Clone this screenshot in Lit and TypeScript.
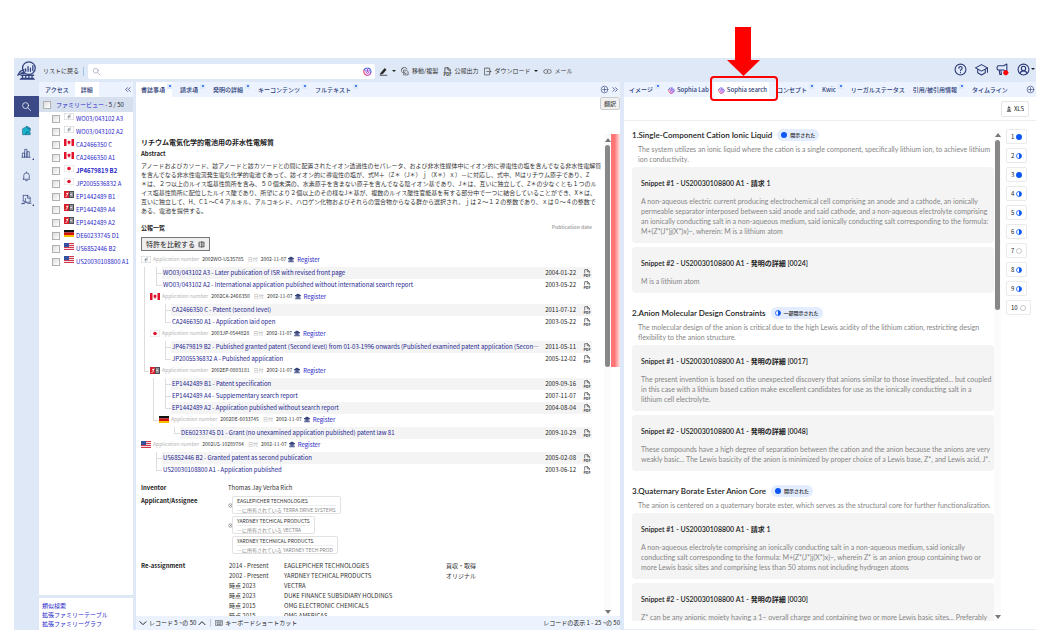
import { LitElement, html, svg, css, nothing, TemplateResult } from "lit";
import { customElement, property } from "lit/decorators.js";
import { classMap } from "lit/directives/class-map.js";

type Pub = [code: string, date: string];
interface Family {
  flag: string;
  app: string;
  pubs: Pub[];
  kids?: Family[];
}
type State = "full" | "half" | "none";

const icon = (cls: string, box: number, body: unknown) =>
  html`<svg class="icon ${cls}" viewBox="0 0 ${box} ${box}" fill="none" stroke="currentColor" stroke-width="1.6" stroke-linecap="round" stroke-linejoin="round" aria-hidden="true">${body}</svg>`;

const shapes = {
  search: svg`<circle cx="10" cy="10" r="6.5"/><path d="M15 15l6 6"/>`,
  logo: svg`<circle cx="15" cy="9" r="8"/><path d="M9 14L1 18l3-5 5-2M5 15l4 1" /><path d="M11 13v-3M14 13V7M17 13V9M20 12V6"/><path d="M4 24h18M5 22h16M7 22v-4M11 22v-4M15 22v-4M19 22v-4M5 18h16"/>`,
  puzzle: svg`<path d="M4 8l9-5 7 4v6l-3 1 3 2v5H4z" fill="#18b4c9" stroke="#246a91"/><path d="M12 3l3 5 5 1M11 20v-4h5" stroke="#15598a"/>`,
  chart: svg`<path d="M3 20V11h5v9M8 20V3h5v17M13 20V8h5v12M2 20h18"/>`,
  bell: svg`<path d="M6 17V10a6 6 0 0 1 12 0v7l1 1H5zM10 21h4M12 4V2"/>`,
  report: svg`<path d="M5 3h10l5 5v10H9M5 3v11M14 3v6h6M2 21c5 0 9-5 8-11M4 15c4 0 8 2 11 6M2 21h6M17 21l5-1"/>`,
  pen: svg`<path d="M5 16L15 4l4 3-9 11-6 1z" fill="#222" stroke="#222"/><path d="M3 22h18" stroke="#222" stroke-width="2"/>`,
  copy: svg`<path d="M4 15a8 8 0 1 1 12-10M8 8h6l5 5v8H8zM3 5l3-2M11 12a3 3 0 1 0 4 4"/>`,
  pdf: svg`<path d="M5 12V2h9l5 5v5M13 2v6h6" stroke-width="2"/><text x="12" y="23" text-anchor="middle" font-size="11" font-weight="700" fill="currentColor" stroke="none">PDF</text>`,
  down: svg`<path d="M10 3H4v18h14v-6M10 3h8v5M10 12h11M17 8l4 4-4 4"/>`,
  link: svg`<path d="M9 17H7a5 5 0 0 1 0-10h2a4 4 0 0 1 4 5M15 7h2a5 5 0 0 1 0 10h-2a4 4 0 0 1-4-5"/>`,
  help: svg`<g stroke-width="2"><circle cx="12" cy="12" r="10"/><path d="M9 9.500a3 3 0 1 1 4.500 2.600c-1 .6-1.500 1-1.500 2.200M12 17.500v.3"/></g>`,
  cap: svg`<path d="M1 9l11-6 11 6-11 6zM5 12v6l7 4 7-4v-6M23 9v8" stroke-width="2"/>`,
  horn: svg`<path d="M20 2v14l-6-3H5a3 3 0 0 1-3-3V8a3 3 0 0 1 3-3h9zM6 13l1 8h3l-1-8" stroke-width="2"/><circle cx="18" cy="18" r="4" fill="#f00" stroke="#f00"/>`,
  user: svg`<g stroke-width="2"><circle cx="12" cy="12" r="10"/><circle cx="12" cy="10" r="4"/><path d="M6 19c1-6 11-6 12 0"/></g>`,
  plus: svg`<circle cx="12" cy="12" r="9"/><path d="M12 7v10M7 12h10"/>`,
  compare: svg`<path d="M10 4H3v16h7M14 4h7v16h-7M12 2v20M17 4v16M6 9v6" stroke-width="2"/>`,
  bank: svg`<path d="M2 8l10-6 10 6zM5 10v8M10 10v8M14 10v8M19 10v8M2 21h20" fill="#1c2c6b" stroke="#1c2c6b" stroke-width="3"/>`,
  upload: svg`<path d="M12 16V4M7 8l5-5 5 5M5 21h14M7 16h10" stroke-width="3"/>`,
  keys: svg`<path d="M2 5h20v14H2zM6 9h2M11 9h2M16 9h2M6 12h2M11 12h2M16 12h2M7 16h10"/>`,
  sophia: svg`<path d="M3 8a10 10 0 0 0 7 14" stroke="#f0466c" stroke-width="3"/><path d="M10 22a10 10 0 0 0 11-8" stroke="#c03ac0" stroke-width="3"/><path d="M13 3a9 9 0 0 1 8 11M3 8c1-3 3-4 6-5" stroke="#4a62ee" stroke-width="3"/><path d="M8 9v4a4 4 0 0 0 8 0V8M12 5v7" stroke="#9c4fd6" stroke-width="2.600"/>`,
  chevDown: svg`<path d="M3 8l9 9 9-9" stroke-width="3"/>`,
  chevUp: svg`<path d="M3 17l9-9 9 9" stroke-width="3"/>`,
  expand: svg`<circle cx="12" cy="12" r="9"/><path d="M8 8l8 8M16 8l-8 8"/>`,
  more: svg`<path d="M5 7l5 5-5 5M12 7l5 5-5 5" stroke-width="2"/>`,
  less: svg`<path d="M12 7l-5 5 5 5M19 7l-5 5 5 5" stroke-width="2"/>`,
};

const flagArt: Record<string, TemplateResult> = {
  WO: svg`<rect x=".5" y=".5" width="19" height="13" fill="#fff" stroke="#ccc"/><path d="M7 10l6-7M7 7h6M9 4v8M12 3v8" stroke="#7b8792" stroke-width="1"/>`,
  CA: svg`<rect width="20" height="14" fill="#fff"/><rect width="5" height="14" fill="#e0122c"/><rect x="15" width="5" height="14" fill="#e0122c"/><path d="M10 2l1 2 2 0-.5 3 1 1-3 2v2h-1v-2l-3-2 1-1L7 4h2z" fill="#e0122c"/>`,
  JP: svg`<rect x=".5" y=".5" width="19" height="13" fill="#fff" stroke="#ddd"/><circle cx="10" cy="7" r="3.600" fill="#e0122c"/>`,
  EP: svg`<rect width="10" height="14" fill="#d8202c"/><rect x="10" width="10" height="14" fill="#4b4f55"/><path d="M3 11c4 0 3-4 5-8M4 5h4M12 4h6M12 7h5M12 10h6" stroke="#fff" stroke-width="1.600" fill="none"/>`,
  DE: svg`<rect width="20" height="5" fill="#111"/><rect y="5" width="20" height="5" fill="#d80f0f"/><rect y="10" width="20" height="4" fill="#f5c400"/>`,
  US: svg`<rect width="20" height="14" fill="#f4dfe2"/><path d="M0 1h20M0 5h20M0 9h20M0 13h20" stroke="#d03a4c" stroke-width="2"/><rect width="10" height="8" fill="#35509c"/>`,
};
const flag = (code: string) =>
  html`<svg class="flag" viewBox="0 0 20 14" role="img" aria-label=${code}>${flagArt[code]}</svg>`;

const base = css`
  :host {
    font-family: "Noto Sans CJK JP", sans-serif;
    font-size: 6px;
    line-height: 10px;
    color: #333;
  }
  * { box-sizing: border-box; }
  button, input { font: inherit; color: inherit; margin: 0; padding: 0; border: 0; background: none; }
  button { display: inline-flex; align-items: center; white-space: nowrap; cursor: pointer; }
  ul, ol, p, h1, h2, h3, dl, dd { margin: 0; padding: 0; list-style: none; }
  h1, h2, h3 { font-size: inherit; }
  a { color: #2a1fc8; text-decoration: none; }
  .icon { flex: none; width: 9px; height: 9px; display: block; }
  .flag { flex: none; width: 10px; height: 7px; display: block; }
  .tabs { display: flex; align-items: stretch; height: 15px; background: #ecf3fe; color: #2b3a78; font-weight: 500; flex: none; }
  .tab { padding: 1px 0 0; gap: 2px; }
  .tab.on { background: #fff; }
  .pop { align-self: flex-start; width: 5px; height: 5px; margin-top: 1px; background: #dce9fd; display: block; }
  .pop::after { content: ""; display: block; width: 2px; height: 2px; margin: 1px 0 0 2px; background: #4a84ee; }
  .grow { flex: 1; }
  .bar { display: flex; flex-direction: column; align-items: center; justify-content: space-between; width: 7px; background: #fbfbfb; padding: 4px 0 2px; flex: none; }
  .up, .dn { width: 0; height: 0; border: 3px solid transparent; border-top: 0; border-bottom: 4px solid #777; }
  .dn { border-bottom: 0; border-top: 4px solid #777; }
  .track { flex: 1; width: 5px; margin: 3px 0; }
  .thumb { width: 5px; border-radius: 3px; background: #888; }
`;

@customElement("state-dot")
export class StateDot extends LitElement {
  @property() state: State = "full";
  static styles = css`
    :host { display: inline-flex; }
    svg { width: 6px; height: 6px; }
  `;
  render() {
    const blue = "#0b57f5";
    return html`<svg viewBox="0 0 12 12">
      ${this.state === "full"
        ? svg`<circle cx="6" cy="6" r="6" fill=${blue}/>`
        : this.state === "half"
          ? svg`<circle cx="6" cy="6" r="5" fill="#fff" stroke=${blue} stroke-width="1.600"/><path d="M6 1a5 5 0 0 1 0 10z" fill=${blue}/>`
          : svg`<circle cx="6" cy="6" r="5" fill="#fff" stroke="#aaa" stroke-width="1.300"/>`}
    </svg>`;
  }
}

@customElement("family-panel")
export class FamilyPanel extends LitElement {
  static styles = [
    base,
    css`
      :host { display: flex; flex-direction: column; gap: 3px; width: 94px; flex: none; }
      .top { flex: 1; background: #fff; }
      .tabs { padding: 0 1px 0 0; }
      .tab { padding: 1px 6px 0; }
      .head { display: flex; align-items: center; gap: 5px; height: 15px; background: #d5dfee; padding-left: 4px; color: #223; white-space: nowrap; }
      input { appearance: none; width: 8px; height: 8px; border: 1px solid #b0b0b0; background: linear-gradient(135deg, #ddd, #fff); flex: none; }
      li { display: flex; align-items: center; height: 13px; padding-left: 13px; gap: 4px; white-space: nowrap; }
      li label { display: flex; gap: 2px; color: #2a1fc8; }
      .flag { margin-top: -1px; }
      .cur { font-weight: 700; }
      .low { background: #fff; padding: 3px 3px 2px; display: flex; flex-direction: column; line-height: 9px; }
    `,
  ];
  render() {
    const items = ["WO03/043102 A3", "WO03/043102 A2", "CA2466350 C", "CA2466350 A1", "JP4679819 B2", "JP2005536832 A", "EP1442489 B1", "EP1442489 A4", "EP1442489 A2", "DE60233745 D1", "US6852446 B2", "US20030108800 A1"];
    return html`
      <section class="top">
        <div class="tabs">
          <button class="tab">アクセス</button><button class="tab on">詳細</button><span class="grow"></span><button aria-label="閉じる">${icon("", 24, shapes.less)}</button>
        </div>
        <div class="head"><input type="checkbox" aria-label="すべて選択" /><span><a href="#">ファミリービュー</a> - 5 / 50</span></div>
        <ul>
          ${items.map(
            (t, i) => html`<li>
              <input type="checkbox" id="p${i}" />
              <label for="p${i}" class=${classMap({ cur: i === 4 })}>${flag(t.slice(0, 2))}${t}</label>
            </li>`
          )}
        </ul>
      </section>
      <nav class="low"><a href="#">類似検索</a><a href="#">拡張ファミリーテーブル</a><a href="#">拡張ファミリーグラフ</a></nav>
    `;
  }
}

const families: Family[] = [
  {
    flag: "WO",
    app: "2002WO-US35785",
    pubs: [
      ["WO03/043102 A3 - Later publication of ISR with revised front page", "2004-01-22"],
      ["WO03/043102 A2 - International application published without international search report", "2003-05-22"],
    ],
    kids: [
      { flag: "CA", app: "2002CA-2466350", pubs: [["CA2466350 C - Patent (second level)", "2011-07-12"], ["CA2466350 A1 - Application laid open", "2003-05-22"]] },
      { flag: "JP", app: "2003JP-0544828", pubs: [["JP4679819 B2 - Published granted patent (Second level) from 01-03-1996 onwards (Published examined patent application (Second level) before 1996)", "2011-05-11"], ["JP2005536832 A - Published application", "2005-12-02"]] },
      {
        flag: "EP",
        app: "2002EP-0803181",
        pubs: [["EP1442489 B1 - Patent specification", "2009-09-16"], ["EP1442489 A4 - Supplementary search report", "2007-11-07"], ["EP1442489 A2 - Application published without search report", "2004-08-04"]],
        kids: [{ flag: "DE", app: "2002DE-6033745", pubs: [["DE60233745 D1 - Grant (no unexamined application published) patent law 81", "2009-10-29"]] }],
      },
    ],
  },
  { flag: "US", app: "2002US-10289784", pubs: [["US6852446 B2 - Granted patent as second publication", "2005-02-08"], ["US20030108800 A1 - Application published", "2003-06-12"]] },
];

@customElement("record-panel")
export class RecordPanel extends LitElement {
  static styles = [
    base,
    css`
      :host { display: flex; flex-direction: column; background: #fff; min-width: 0; min-height: 0; }
      .tabs { gap: 8px; padding: 0; }
      .tabs .grow + button { margin-right: -6px; }
      .tab.on { padding-left: 5px; }
      .tools { display: flex; justify-content: flex-end; height: 37px; flex: none; }
      .tr { height: 13px; padding: 0 3px; border: 1px solid #ccc; border-radius: 2px; background: #f0f0f0; }
      .main { flex: 1; display: flex; min-height: 0; overflow: hidden; }
      .doc { flex: 1; min-width: 0; padding: 3px 12px 0 5px; overflow: hidden; color: #333; }
      .thumb { height: 222px; }
      .heat { width: 9px; height: 233px; background: linear-gradient(90deg, #ff7474 40%, #ffb9b9 75%, #ffe3e3); flex: none; }
      h1 { font-size: 7px; line-height: 11px; margin-bottom: 1px; color: #222; }
      h2 { color: #222; }
      .abs { line-height: 9px; margin-top: 2px; white-space: nowrap; }
      .abs span { display: block; }
      .listhead { display: flex; justify-content: space-between; margin-top: 8px; }
      .listhead span { font-size: 5px; color: #aaa; font-weight: 700; line-height: 8px; }
      .cmp { font-size: 7px; height: 14px; margin: 4px 0 3px; padding: 0 4px; gap: 3px; border: 1px solid #777; background: #efefef; color: #222; }
      .cmp .icon { width: 7px; height: 7px; }
      .fam { position: relative; }
      .app { display: flex; gap: 3px; height: 13px; line-height: 10px; font-size: 5px; white-space: nowrap; color: #b4b4b4; }
      .app b { font-weight: 400; color: #333; }
      .app a { font-size: 6px; line-height: 12px; }
      .app .flag { margin: 2px -1px 0 0; }
      .app .icon { width: 6px; height: 7px; margin: 2px 0 0 -1px; }
      .pubs { padding-left: 21px; position: relative; }
      .pubs li { position: relative; display: flex; align-items: center; height: 12px; padding: 0 1px; }
      .pubs li:nth-child(odd) { background: #f4f4f4; }
      .pubs li::before { content: ""; position: absolute; left: -6px; top: -6px; width: 5px; height: 12px; border: solid #ddd; border-width: 0 0 1px 1px; }
      .pubs li:first-child::before { top: 0; height: 6px; }
      .pubs a { flex: 1; min-width: 0; overflow: hidden; text-overflow: ellipsis; white-space: nowrap; color: #23238e; }
      .pubs time { margin: 0 7px 0 4px; color: #222; }
      .pubs .icon { color: #444; width: 8px; height: 8px; }
      .kids { padding-left: 9px; }
      .kids > .fam::before { content: ""; position: absolute; left: -6px; top: -1px; width: 1px; bottom: 0; background: #ddd; }
      .kids > .fam:last-child::before { bottom: auto; height: 7px; width: 4px; background: none; border: solid #ddd; border-width: 0 0 1px 1px; }
      .has > .pubs::before { content: ""; position: absolute; left: 3px; top: 0; bottom: 0; width: 1px; background: #ddd; }
      .info { display: grid; grid-template-columns: 87px 1fr; row-gap: 3px; margin-top: 7px; }
      dt { font-weight: 700; color: #222; }
      .own { display: flex; flex-direction: column; align-items: flex-start; gap: 2px; margin: 0 0 4px; }
      .own li { display: flex; align-items: center; gap: 0; }
      .own .icon { width: 5px; height: 5px; margin-right: -1px; }
      .own .none { width: 4px; }
      .own div { border: 1px solid #e2e2e2; border-radius: 2px; padding: 0 4px; height: 18px; font-size: 5px; line-height: 8px; white-space: nowrap; }
      .own p + p { color: #888; border-top: 1px solid #eee; }
      table { border-collapse: collapse; width: 100%; }
      td { padding: 0 0 0 1px; height: 10px; white-space: nowrap; }
      td:nth-child(1) { width: 55px; }
      td:nth-child(2) { width: 162px; }
      footer { display: flex; align-items: center; gap: 2px; height: 14px; padding: 0 0 0 3px; background: #ecf3fe; color: #222; flex: none; white-space: nowrap; }
      footer i { width: 1px; height: 8px; background: #bcd; margin: 0 2px; }
      footer button { gap: 2px; }
      footer .icon { width: 8px; height: 8px; }
    `,
  ];
  fam(f: Family): TemplateResult {
    return html`<li class=${classMap({ fam: true, has: !!f.kids })}>
      <div class="app">${flag(f.flag)}<span>Application number</span> <b>${f.app}</b> <span>&nbsp;日付</span> <b>2002-11-07</b>${icon("", 24, shapes.bank)}<a href="#">Register</a></div>
      <ul class="pubs">
        ${f.pubs.map(([t, d]) => html`<li><a href="#">${t}</a><time>${d}</time>${icon("", 24, shapes.pdf)}</li>`)}
      </ul>
      ${f.kids ? html`<ul class="kids">${f.kids.map((k) => this.fam(k))}</ul>` : nothing}
    </li>`;
  }
  render() {
    const tabs = ["書誌事項", "請求項", "発明の詳細", "キーコンテンツ", "フルテキスト"];
    const abs = [
      "アノードおよびカソード、該アノードと該カソードとの間に配置されたイオン透過性のセパレータ、および非水性媒体中にイオン的に導電性の塩を含んでなる非水性電解質",
      "を含んでなる非水性電流発生電気化学的電池であって、該イオン的に導電性の塩が、式M＋（Z＊（J＊）ｊ（X＊）ｘ）－に対応し、式中、Mはリチウム原子であり、Z",
      "＊は、２つ以上のルイス塩基性箇所を含み、５０個未満の、水素原子を含まない原子を含んでなる陰イオン基であり、J＊は、互いに独立して、Z＊の少なくとも１つのル",
      "イス塩基性箇所に配位したルイス酸であり、所望により２個以上のその様なJ＊基が、複数のルイス酸性官能基を有する部分中で一つに結合していることができ、X＊は、",
      "互いに独立して、H、C１～C４アルキル、アルコキシド、ハロゲン化物およびそれらの混合物からなる群から選択され、ｊは２～１２の整数であり、ｘは０～４の整数で",
      "ある、電池を提供する。",
    ];
    const owners: [string, string, boolean][] = [
      ["EAGLEPICHER TECHNOLOGIES", "TERRA DRIVE SYSTEMS", true],
      ["YARDNEY TECHICAL PRODUCTS", "VECTRA", true],
      ["YARDNEY TECHNICAL PRODUCTS", "YARDNEY TECH PROD", false],
    ];
    const moves = [
      ["2014 - Present", "EAGLEPICHER TECHNOLOGIES", "買収・取得"],
      ["2002 - Present", "YARDNEY TECHICAL PRODUCTS", "オリジナル"],
      ["時点 2023", "VECTRA", ""],
      ["時点 2023", "DUKE FINANCE SUBSIDIARY HOLDINGS", ""],
      ["時点 2015", "OMG ELECTRONIC CHEMICALS", ""],
      ["時点 2015", "OMG AMERICAS", ""],
    ];
    return html`
      <div class="tabs">
        ${tabs.map((t, i) => html`<button class=${classMap({ tab: true, on: i === 0 })}>${t}<span class="pop"></span></button>`)}
        <span class="grow"></span><button aria-label="追加">${icon("", 24, shapes.plus)}</button><button aria-label="展開">${icon("", 24, shapes.more)}</button>
      </div>
      <div class="tools"><button class="tr">翻訳</button></div>
      <div class="main">
        <article class="doc">
          <h1>リチウム電気化学的電池用の非水性電解質</h1>
          <h2>Abstract</h2>
          <p class="abs">${abs.map((l) => html`<span>${l}</span>`)}</p>
          <div class="listhead"><h2>公報一覧</h2><span>Publication date</span></div>
          <button class="cmp">特許を比較する ${icon("", 24, shapes.compare)}</button>
          <ul>${families.map((f) => this.fam(f))}</ul>
          <dl class="info">
            <dt>Inventor</dt><dd>Thomas Jay Verba Rich</dd>
            <dt>Applicant/Assignee</dt>
            <dd><ul class="own">
              ${owners.map(([a, b, x]) => html`<li>${x ? icon("", 24, shapes.expand) : html`<span class="none"></span>`}<div><p>${a}</p><p>―に所有されている ${b}</p></div></li>`)}
            </ul></dd>
            <dt>Re-assignment</dt>
            <dd><table><tbody>${moves.map((r) => html`<tr>${r.map((c) => html`<td>${c}</td>`)}</tr>`)}</tbody></table></dd>
          </dl>
        </article>
        <div class="bar"><span class="up"></span><div class="track"><div class="thumb"></div></div><span class="dn"></span></div>
        <div class="heat"></div>
      </div>
      <footer>
        <button aria-label="次">${icon("", 24, shapes.chevDown)}</button>レコード 5 ~の 50<button aria-label="前">${icon("", 24, shapes.chevUp)}</button><i></i>
        <button>${icon("", 24, shapes.keys)}キーボードショートカット</button><span class="grow"></span><span>レコードの表示 1 - 25 ~の 50</span>
      </footer>
    `;
  }
}

interface Concept {
  title: string;
  state: State;
  label: string;
  desc: string;
  snips: [string, string][];
}
const concepts: Concept[] = [
  {
    title: "1.Single-Component Cation Ionic Liquid",
    state: "full",
    label: "開示された",
    desc: "The system utilizes an ionic liquid where the cation is a single component, specifically lithium ion, to achieve lithium ion conductivity.",
    snips: [
      ["Snippet #1 - US20030108800 A1 - 請求 1", "A non-aqueous electric current producing electrochemical cell comprising an anode and a cathode, an ionically permeable separator interposed between said anode and said cathode, and a non-aqueous electrolyte comprising an ionically conducting salt in a non-aqueous medium, said ionically conducting salt corresponding to the formula: M+(Z*(J*)j(X*)x)−, wherein: M is a lithium atom"],
      ["Snippet #2 - US20030108800 A1 - 発明の詳細 [0024]", "M is a lithium atom"],
    ],
  },
  {
    title: "2.Anion Molecular Design Constraints",
    state: "half",
    label: "一部開示された",
    desc: "The molecular design of the anion is critical due to the high Lewis acidity of the lithium cation, restricting design flexibility to the anion structure.",
    snips: [
      ["Snippet #1 - US20030108800 A1 - 発明の詳細 [0017]", "The present invention is based on the unexpected discovery that anions similar to those investigated... but coupled in this case with a lithium based cation make excellent candidates for use as the ionically conducting salt in a lithium cell electrolyte."],
      ["Snippet #2 - US20030108800 A1 - 発明の詳細 [0048]", "These compounds have a high degree of separation between the cation and the anion because the anions are very weakly basic... The Lewis basicity of the anion is minimized by proper choice of a Lewis base, Z*, and Lewis acid, J*."],
    ],
  },
  {
    title: "3.Quaternary Borate Ester Anion Core",
    state: "full",
    label: "開示された",
    desc: "The anion is centered on a quaternary borate ester, which serves as the structural core for further functionalization.",
    snips: [
      ["Snippet #1 - US20030108800 A1 - 請求 1", "A non-aqueous electrolyte comprising an ionically conducting salt in a non-aqueous medium, said ionically conducting salt corresponding to the formula: M+(Z*(J*)j(X*)x)−, wherein Z* is an anion group containing two or more Lewis basic sites and comprising less than 50 atoms not including hydrogen atoms"],
      ["Snippet #2 - US20030108800 A1 - 発明の詳細 [0030]", "Z* can be any anionic moiety having a 1− overall charge and containing two or more Lewis basic sites... Preferably"],
    ],
  },
];

@customElement("sophia-panel")
export class SophiaPanel extends LitElement {
  static styles = [
    base,
    css`
      :host { display: flex; flex-direction: column; background: #fff; min-width: 0; min-height: 0; border-bottom: 1px solid #e6edf8; }
      .tabs { gap: 8px; padding: 0 1px 0 5px; }
      .tab .icon { width: 7px; height: 7px; }
      .tab.lab { margin-right: -3px; }
      .tab.on { padding: 1px 2px 0 4px; position: relative; }
      .mark { position: absolute; left: -4px; top: -6px; width: 68px; height: 25px; border: 2px solid #f00; border-radius: 4px; z-index: 2; pointer-events: none; }
      .arrow { position: absolute; left: 13px; top: -55px; width: 33px; height: 49px; z-index: 3; pointer-events: none; }
      .tools { display: flex; justify-content: flex-end; align-items: center; height: 24px; padding: 0 7px 0 0; border-bottom: 1px solid #eee; flex: none; }
      .xls { border: 1px solid #e6e6e6; border-radius: 2px; height: 16px; padding: 0 4px; gap: 2px; color: #222; }
      .xls .icon { width: 6px; height: 6px; }
      .main { flex: 1; display: flex; min-height: 0; padding: 8px 7px 8px 8px; }
      .list { flex: 1; min-width: 0; overflow: hidden; display: flex; flex-direction: column; gap: 14px; font-family: Lato, "Noto Sans CJK JP", sans-serif; }
      .list section { flex: none; }
      .ttl { display: flex; align-items: center; gap: 5px; height: 12px; }
      h2 { font-size: 8px; font-weight: 600; color: #222; line-height: 12px; }
      .pill { display: flex; align-items: center; gap: 3px; background: #e3edff; color: #222; border-radius: 6px; height: 12px; padding: 0 4px; font-size: 5px; font-weight: 500; }
      .desc, .snip { font-size: 7px; color: #858585; }
      .desc { padding: 0 0 0 6px; margin: 3px 0; }
      .snip { background: #f4f4f4; border-radius: 4px; padding: 11px 0 7px 9px; }
      .snip + .snip { margin-top: 4px; }
      h3 { line-height: 11px; font-weight: 600; color: #222; margin-bottom: 7px; }
      .thumb { height: 170px; }
      .bar { margin-right: 5px; }
      ol { display: flex; flex-direction: column; align-items: flex-start; gap: 4px; width: 23px; flex: none; }
      ol button { height: 15px; border: 1px solid #eaeaea; border-radius: 2px; padding: 0 4px; gap: 2px; color: #222; }
      ol li { display: flex; }
    `,
  ];
  render() {
    const states: State[] = ["full", "half", "full", "half", "half", "half", "none", "half", "half", "none"];
    const pop = html`<span class="pop"></span>`;
    return html`
      <div class="tabs">
        <button class="tab">イメージ${pop}</button>
        <button class="tab lab">${icon("", 24, shapes.sophia)}Sophia Lab</button>
        <button class="tab on">${icon("", 24, shapes.sophia)}Sophia search
          <span class="mark"></span>
          <svg class="arrow" viewBox="0 0 33 49"><path d="M8 0h16v33h9L16.500 49 0 33h8z" fill="#f00" /></svg>
        </button>
        <button class="tab">コンセプト${pop}</button><button class="tab">Kwic${pop}</button><button class="tab">リーガルステータス</button><button class="tab">引用/被引用情報${pop}</button><button class="tab">タイムライン</button>
        <span class="grow"></span><button aria-label="追加">${icon("", 24, shapes.plus)}</button>
      </div>
      <div class="tools"><button class="xls">${icon("", 24, shapes.upload)}XLS</button></div>
      <div class="main">
        <div class="list">
          ${concepts.map(
            (c) => html`<section>
              <div class="ttl"><h2>${c.title}</h2><span class="pill"><state-dot .state=${c.state}></state-dot>${c.label}</span></div>
              <p class="desc">${c.desc}</p>
              ${c.snips.map(([h, t]) => html`<article class="snip"><h3>${h}</h3><p>${t}</p></article>`)}
            </section>`
          )}
        </div>
        <div class="bar"><span class="up"></span><div class="track"><div class="thumb"></div></div><span class="dn"></span></div>
        <ol>${states.map((s, i) => html`<li><button>${i + 1}<state-dot .state=${s}></state-dot></button></li>`)}</ol>
      </div>
    `;
  }
}

@customElement("app-root")
export class AppRoot extends LitElement {
  static styles = [
    base,
    css`
      :host { display: flex; flex-direction: column; height: 100vh; padding: 58px 10px 7px 14px; background: #fff; box-sizing: border-box; overflow: hidden; }
      .app { flex: 1; min-height: 0; display: flex; background: #dfe8f6; }
      .rail { width: 25px; flex: none; display: flex; flex-direction: column; align-items: center; color: #33437f; }
      .rail button { width: 25px; height: 23px; justify-content: center; position: relative; }
      .rail .icon { width: 11px; height: 11px; }
      .rail .brand { height: 38px; padding-bottom: 13px; }
      .rail .brand .icon { width: 19px; height: 19px; }
      .rail .sel { background: #3b4a86; color: #fff; height: 21px; margin-bottom: 2px; }
      .more::after { content: ""; position: absolute; right: 5px; bottom: 5px; border: 1px solid transparent; border-right-color: #33437f; border-bottom-color: #33437f; }
      .side { flex: 1; min-width: 0; display: flex; flex-direction: column; }
      header { display: flex; align-items: center; height: 24px; padding: 2px 1px 0 4px; flex: none; white-space: nowrap; color: #333; }
      .sep { width: 1px; height: 9px; background: #9cc4ee; margin: 0 4px; }
      .find { display: flex; align-items: center; width: 287px; height: 15px; background: #fff; border-radius: 2px; padding: 0 3px 0 4px; color: #8a97ad; }
      .find input { flex: 1; min-width: 0; outline: none; }
      .acts { display: flex; gap: 5px; margin-left: 4px; align-items: center; }
      .acts button { gap: 2px; }
      .caret { border: 2px solid transparent; border-top-color: #222; border-bottom: 0; margin-left: 2px; }
      .me { display: flex; gap: 8px; color: #2b3a78; align-items: center; margin-top: -4px; }
      .me .icon { width: 13px; height: 13px; }
      .me .caret { margin-left: 1px; }
      .cols { flex: 1; min-height: 0; display: flex; }
      .panes { flex: 1; min-width: 0; display: grid; grid-template-columns: 484fr 412fr; gap: 4px; margin-left: 3px; grid-template-rows: 100%; }
    `,
  ];
  render() {
    const s = shapes;
    return html`<div class="app">
      <nav class="rail">
        <button class="brand" aria-label="ホーム">${icon("", 24, s.logo)}</button>
        <button class="sel" aria-label="検索">${icon("", 24, s.search)}</button>
        <button aria-label="拡張">${icon("", 24, s.puzzle)}</button>
        <button class="more" aria-label="分析">${icon("", 24, s.chart)}</button>
        <button aria-label="通知">${icon("", 24, s.bell)}</button>
        <button class="more" aria-label="レポート">${icon("", 24, s.report)}</button>
      </nav>
      <div class="side">
        <header>
          <button>リストに戻る</button><span class="sep"></span>
          <div class="find">${icon("", 24, s.search)}<input type="text" aria-label="検索" />${icon("", 24, s.sophia)}</div>
          <div class="acts">
            <button aria-label="ハイライト">${icon("", 24, s.pen)}<span class="caret"></span></button>
            <button>${icon("", 24, s.copy)}移動/複製</button><button>${icon("", 24, s.pdf)}公報出力</button>
            <button>${icon("", 24, s.down)}ダウンロード<span class="caret"></span></button>
            <button>${icon("", 24, s.link)}メール</button>
          </div>
          <span class="grow"></span>
          <div class="me">
            <button aria-label="ヘルプ">${icon("", 24, s.help)}</button><button aria-label="学習">${icon("", 24, s.cap)}</button>
            <button aria-label="お知らせ">${icon("", 24, s.horn)}</button><button aria-label="アカウント">${icon("", 24, s.user)}<span class="caret"></span></button>
          </div>
        </header>
        <div class="cols">
          <family-panel></family-panel>
          <div class="panes"><record-panel></record-panel><sophia-panel></sophia-panel></div>
        </div>
      </div>
    </div>`;
  }
}
